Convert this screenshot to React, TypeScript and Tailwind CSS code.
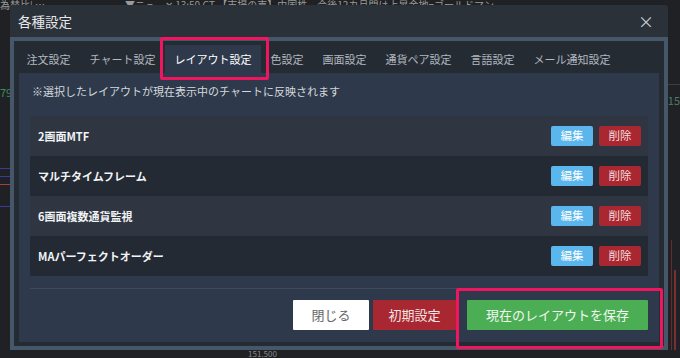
import React from "react";

const tabs = ["注文設定", "チャート設定", "レイアウト設定", "色設定", "画面設定", "通貨ペア設定", "言語設定", "メール通知設定"];
const rows = ["2画面MTF", "マルチタイムフレーム", "6画面複数通貨監視", "MAパーフェクトオーダー"];

export default function App() {
  return (
    <div
      className="relative w-[680px] h-[358px] overflow-hidden bg-[#1f2124]"
      style={{ fontFamily: '"Noto Sans CJK JP", "Noto Sans", sans-serif' }}
    >
      {/* background chart bits */}
      <div className="absolute left-0 top-0 whitespace-nowrap text-[10px] leading-[10px] text-[#9a9a9a]">
        為替比| …　　　　　　　　▼ニュ　✕ 13:50 GT 【市場の声】中国株、今後12カ月間は上昇余地=ゴールドマン
      </div>
      <div className="absolute left-0 top-[84px] text-[11px] text-[#3f8a5a]">79</div>
      <div className="absolute left-0 top-[168px] w-[10px] h-px bg-[#3a3aa0]" />
      <div className="absolute left-0 top-[176px] w-[10px] h-px bg-[#3a3aa0]" />
      <div className="absolute left-0 top-[184px] w-[10px] h-px bg-[#a04040]" />
      <div className="absolute left-0 top-[206px] w-[10px] h-px bg-[#3a3aa0]" />
      <div className="absolute right-0 top-[92px] text-[11px] text-[#4f7a6a]">15</div>
      <div className="absolute right-0 top-[84px] w-[12px] h-px bg-[#3a3d42]" />
      <div className="absolute right-[8px] top-[240px] w-px h-[110px] bg-[#6a2a2a]" />
      <div className="absolute right-[4px] top-[270px] w-[2px] h-[80px] bg-[#7a3030]" />
      <div className="absolute left-[248px] top-[350px] text-[8px] leading-[8px] text-[#8a8a8a]">151.500</div>

      {/* dialog */}
      <div className="relative ml-[10px] mt-[5px] w-[658px] h-[345px] rounded-t-[3px] bg-[#2b3139] flex flex-col">
        <div className="h-[32px] flex items-center justify-between pl-[8px] pr-[14px]">
          <span className="text-[13.5px] text-[#e6e8ea]">各種設定</span>
          <span className="text-[16px] text-[#c8ccd0] leading-none">×</span>
        </div>
        <div className="flex-1 bg-[#46576a] p-[4px] flex">
          <div className="flex-1 bg-[#252b33] flex flex-col">
            <div className="h-[32px] flex items-end pl-[3px]">
              {tabs.map((t, i) => (
                <div
                  key={t}
                  className={
                    i === 2
                      ? "h-[28px] px-[9.5px] flex items-center text-[11px] text-white bg-[#2e3a4b]"
                      : "h-[28px] px-[9.5px] flex items-center text-[11px] text-[#b2b8c0]"
                  }
                >
                  {t}
                </div>
              ))}
            </div>
            <div className="mx-[5px] mb-[4px] flex-1 bg-[#2e3a4b] flex flex-col px-[11px]">
              <div className="pt-[10px] pl-[2px] text-[11px] text-[#d4d8dc] h-[43px]">
                ※選択したレイアウトが現在表示中のチャートに反映されます
              </div>
              <div className="flex flex-col">
                {rows.map((r, i) => (
                  <div
                    key={r}
                    className={
                      (i % 2 === 0 ? "bg-[#2f3641]" : "bg-[#232a33]") +
                      " h-[40px] flex items-center justify-between pl-[8px] pr-[7px]"
                    }
                  >
                    <span className="text-[11px] font-bold text-[#f2f4f6]">{r}</span>
                    <div className="flex gap-[6px]">
                      <div className="w-[42px] h-[20px] rounded-[2px] bg-[#5ab6ec] text-white text-[11.5px] flex items-center justify-center">
                        編集
                      </div>
                      <div className="w-[42px] h-[20px] rounded-[2px] bg-[#a82731] text-[#f4dede] text-[11.5px] flex items-center justify-center">
                        削除
                      </div>
                    </div>
                  </div>
                ))}
              </div>
              <div className="mt-[12px] h-px bg-[#3c4a5b]" />
              <div className="flex justify-end gap-[4px] mt-[11px]">
                <div className="w-[76px] h-[30px] bg-white text-[#666] text-[13px] flex items-center justify-center rounded-[1px]">
                  閉じる
                </div>
                <div className="w-[83px] h-[30px] bg-[#a82731] text-[#f4e4e4] text-[13px] flex items-center justify-center rounded-[1px] mr-[7px]">
                  初期設定
                </div>
                <div className="w-[181px] h-[30px] bg-[#4cae54] text-[#f0f8f0] text-[13px] flex items-center justify-center rounded-[1px]">
                  現在のレイアウトを保存
                </div>
              </div>
            </div>
          </div>
        </div>
      </div>

      {/* annotation boxes */}
      <div className="absolute left-[160px] top-[37px] w-[109px] h-[43px] border-[3px] border-[#f0155f] rounded-[2px]" />
      <div className="absolute left-[456px] top-[288px] w-[207px] h-[61px] border-[3px] border-[#f0155f] rounded-[2px]" />
    </div>
  );
}
